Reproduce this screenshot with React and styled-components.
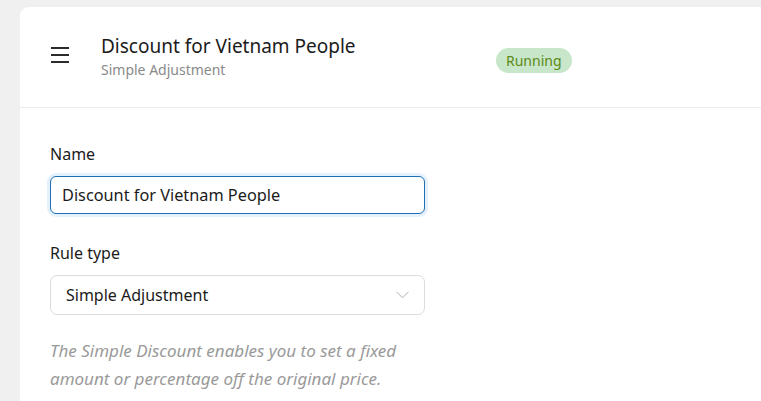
import React from 'react';
import styled, { createGlobalStyle } from 'styled-components';

const GlobalStyle = createGlobalStyle`
  html, body {
    margin: 0;
    padding: 0;
    overflow: hidden;
    background: #f0f0f0;
    font-family: 'Noto Sans', 'Open Sans', sans-serif;
  }
`

const Page = styled.div`
  padding: 7px 0 0 20px;
  height: 394px;
  overflow: hidden;
`

const Card = styled.div`
  width: 780px;
  height: 100%;
  background: #ffffff;
  border-radius: 9px 0 0 0;
`

const Header = styled.header`
  display: flex;
  align-items: center;
  height: 101px;
  padding-left: 31px;
  box-sizing: border-box;
  border-bottom: 1px solid #ebebeb;
`

const MenuButton = styled.button`
  display: flex;
  flex-direction: column;
  gap: 5.5px;
  width: 18px;
  margin: 0 32px 4px 0;
  padding: 0;
  border: 0;
  background: none;
  span {
    display: block;
    height: 1.6px;
    background: #2b2b2b;
  }
`

const TitleBlock = styled.div`
  display: flex;
  flex-direction: column;
  width: 395px;
`

const Title = styled.h1`
  margin: 0;
  font-size: 19px;
  font-weight: 400;
  line-height: 24px;
  color: #1b1b1b;
`

const Subtitle = styled.p`
  margin: 2px 0 0;
  font-size: 14px;
  line-height: 20px;
  color: #8a8a8a;
`

const Badge = styled.span`
  display: inline-flex;
  align-items: center;
  height: 25px;
  padding: 0 10px;
  margin-top: 6px;
  border-radius: 13px;
  background: #c8e6c9;
  color: #5b8a17;
  font-size: 14px;
`

const Form = styled.div`
  display: flex;
  flex-direction: column;
  width: 375px;
  padding: 35px 0 0 30px;
`

const Label = styled.label`
  font-size: 16px;
  line-height: 22px;
  color: #1b1b1b;
  margin-bottom: 11px;
`

const Input = styled.input`
  box-sizing: border-box;
  height: 38px;
  padding: 0 11px;
  margin-bottom: 28px;
  border: 1.5px solid #1f6fb2;
  border-radius: 6px;
  box-shadow: 0 0 0 3px #e4f1fc;
  font-family: inherit;
  font-size: 16.3px;
  color: #1b1b1b;
  outline: none;
`

const Select = styled.div`
  display: flex;
  align-items: center;
  justify-content: space-between;
  box-sizing: border-box;
  height: 40px;
  padding: 0 15px;
  border: 1px solid #dcdcdc;
  border-radius: 7px;
  font-size: 16px;
  color: #1b1b1b;
`

const Help = styled.p`
  margin: 22px 0 0;
  font-size: 17px;
  font-style: italic;
  line-height: 28px;
  color: #9a9a9a;
`

function Chevron() {
  return (
    <svg width="13" height="8" viewBox="0 0 13 8" fill="none">
      <path d="M0.5 0.8 L6.5 6.8 L12.5 0.8" stroke="#b0b0b0" strokeWidth="1" />
    </svg>
  );
}

export default function App() {
  return (
    <>
      <GlobalStyle />
      <Page>
        <Card>
          <Header>
            <MenuButton type="button" aria-label="menu">
              <span /><span /><span />
            </MenuButton>
            <TitleBlock>
              <Title>Discount for Vietnam People</Title>
              <Subtitle>Simple Adjustment</Subtitle>
            </TitleBlock>
            <Badge>Running</Badge>
          </Header>
          <Form>
            <Label>Name</Label>
            <Input defaultValue="Discount for Vietnam People" />
            <Label>Rule type</Label>
            <Select>
              <span>Simple Adjustment</span>
              <Chevron />
            </Select>
            <Help>The Simple Discount enables you to set a fixed amount or percentage off the original price.</Help>
          </Form>
        </Card>
      </Page>
    </>
  );
}
